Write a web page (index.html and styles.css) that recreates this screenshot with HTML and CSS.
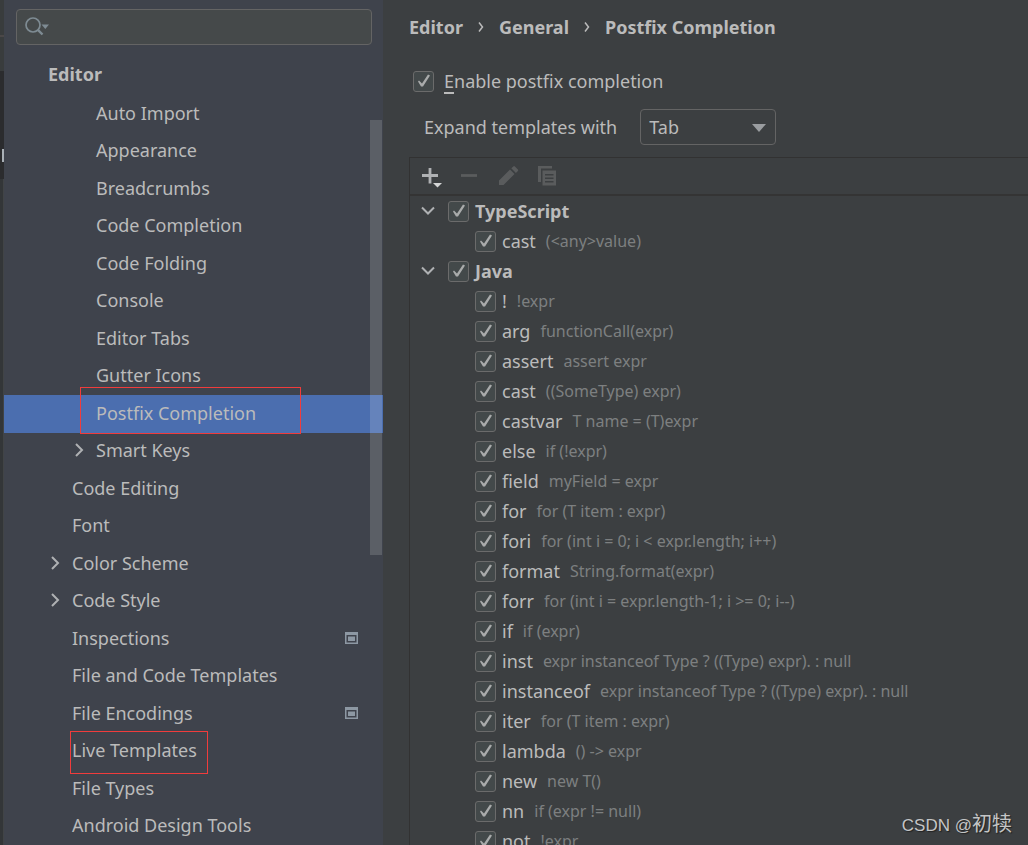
FILE: index.html
```html
<!DOCTYPE html>
<html lang="en">
<head>
<meta charset="utf-8">
<title>Postfix Completion</title>
<link rel="stylesheet" href="styles.css">
</head>
<body>
<div class="window">
  <div class="backdrop"><span class="bar-top"></span><span class="bar-line"></span><span class="bar-tab"></span><span class="bar-rest"></span></div>
  <aside class="sidebar">
    <div class="search">
      <svg class="search-icon" width="26" height="22" viewBox="0 0 26 22"><circle cx="9" cy="9" r="7" fill="none" stroke="#7e8b93" stroke-width="1.7"/><path d="M13.6 13.6L18.5 18.5" stroke="#7e8b93" stroke-width="2.4"/><path d="M17.5 8.5h7.5l-3.7 4.5z" fill="#7e8b93"/></svg>
      <input class="search-input" type="text" aria-label="Search settings">
    </div>
    <h2 class="group">Editor</h2>
    <ul class="nav">
      <li class="deep"><a href="#">Auto Import</a></li>
      <li class="deep"><a href="#">Appearance</a></li>
      <li class="deep"><a href="#">Breadcrumbs</a></li>
      <li class="deep"><a href="#">Code Completion</a></li>
      <li class="deep"><a href="#">Code Folding</a></li>
      <li class="deep"><a href="#">Console</a></li>
      <li class="deep"><a href="#">Editor Tabs</a></li>
      <li class="deep"><a href="#">Gutter Icons</a></li>
      <li class="deep selected"><a href="#">Postfix Completion</a><span class="mark mark-postfix"></span></li>
      <li class="deep"><svg class="arrow" width="10" height="14" viewBox="0 0 10 14"><path d="M2 1l6 6-6 6"/></svg><a href="#">Smart Keys</a></li>
      <li><a href="#">Code Editing</a></li>
      <li><a href="#">Font</a></li>
      <li><svg class="arrow" width="10" height="14" viewBox="0 0 10 14"><path d="M2 1l6 6-6 6"/></svg><a href="#">Color Scheme</a></li>
      <li><svg class="arrow" width="10" height="14" viewBox="0 0 10 14"><path d="M2 1l6 6-6 6"/></svg><a href="#">Code Style</a></li>
      <li><a href="#">Inspections</a><svg class="project" width="13" height="12" viewBox="0 0 13 12"><path d="M0 0h13v12H0zM1.5 3v7.500h10V3z" fill="#8d98a3" fill-rule="evenodd"/><path d="M3 4.500h7v4.500H3z" fill="#8d98a3"/></svg></li>
      <li><a href="#">File and Code Templates</a></li>
      <li><a href="#">File Encodings</a><svg class="project" width="13" height="12" viewBox="0 0 13 12"><path d="M0 0h13v12H0zM1.5 3v7.500h10V3z" fill="#8d98a3" fill-rule="evenodd"/><path d="M3 4.500h7v4.500H3z" fill="#8d98a3"/></svg></li>
      <li><a href="#">Live Templates</a><span class="mark mark-live"></span></li>
      <li><a href="#">File Types</a></li>
      <li><a href="#">Android Design Tools</a></li>
    </ul>
    <div class="scrollbar"></div>
  </aside>
  <main class="content">
    <nav class="crumbs">
      <a href="#">Editor</a>
      <svg width="6" height="12" viewBox="0 0 6 12"><path d="M1 1.500l3.500 4.500L1 10.500"/></svg>
      <a href="#">General</a>
      <svg width="6" height="12" viewBox="0 0 6 12"><path d="M1 1.500l3.500 4.500L1 10.500"/></svg>
      <a href="#">Postfix Completion</a>
    </nav>
    <label class="enable"><input class="check" type="checkbox" checked><span><u>E</u>nable postfix completion</span></label>
    <div class="expand">
      <label for="key">Expand templates with</label>
      <div class="select-box">
        <select id="key"><option>Tab</option><option>Space</option><option>Enter</option></select>
        <svg class="select-arrow" width="14" height="8" viewBox="0 0 14 8"><path d="M0 0h14L7 8z" fill="#9a9da0"/></svg>
      </div>
    </div>
    <section class="panel">
      <div class="toolbar">
        <button type="button" aria-label="Add"><svg width="22" height="22" viewBox="0 0 22 22"><path d="M2 9.500h16M10 2v15.500" stroke="#afb1b3" stroke-width="2.800"/><path d="M13 17h9l-4.500 4.500z" fill="#d4d5d6"/></svg></button>
        <button type="button" aria-label="Remove"><svg width="22" height="22" viewBox="0 0 22 22"><path d="M2 9.500h16" stroke="#5a5c5d" stroke-width="2.800"/></svg></button>
        <button type="button" aria-label="Edit"><svg width="22" height="22" viewBox="0 0 22 22"><path d="M1 14.500L12 3.500l4.500 4.500-11 11H1zM13.300 2.200l2-1.800q.8-.6 1.600.1l3 3q.7.8 0 1.500l-2 2z" fill="#5a5c5d"/></svg></button>
        <button type="button" aria-label="Duplicate"><svg width="22" height="22" viewBox="0 0 22 22"><path d="M1 0h14v2.500H4V16H1z" fill="#5a5c5d"/><path d="M5.500 4.500H19V19.500H5.500zM8 8v1.500h8.500V8zM8 11.500V13h8.500v-1.500zM8 15v1.500h8.500V15z" fill="#5a5c5d" fill-rule="evenodd"/></svg></button>
      </div>
      <ul class="tree">
        <li class="lang"><svg class="open" width="14" height="10" viewBox="0 0 14 10"><path d="M1 1.500l6 6 6-6"/></svg><label><input class="check" type="checkbox" checked>TypeScript</label></li>
        <li><label><input class="check" type="checkbox" checked>cast<span class="hint">(&lt;any&gt;value)</span></label></li>
        <li class="lang"><svg class="open" width="14" height="10" viewBox="0 0 14 10"><path d="M1 1.500l6 6 6-6"/></svg><label><input class="check" type="checkbox" checked>Java</label></li>
        <li><label><input class="check" type="checkbox" checked>!<span class="hint">!expr</span></label></li>
        <li><label><input class="check" type="checkbox" checked>arg<span class="hint">functionCall(expr)</span></label></li>
        <li><label><input class="check" type="checkbox" checked>assert<span class="hint">assert expr</span></label></li>
        <li><label><input class="check" type="checkbox" checked>cast<span class="hint">((SomeType) expr)</span></label></li>
        <li><label><input class="check" type="checkbox" checked>castvar<span class="hint">T name = (T)expr</span></label></li>
        <li><label><input class="check" type="checkbox" checked>else<span class="hint">if (!expr)</span></label></li>
        <li><label><input class="check" type="checkbox" checked>field<span class="hint">myField = expr</span></label></li>
        <li><label><input class="check" type="checkbox" checked>for<span class="hint">for (T item : expr)</span></label></li>
        <li><label><input class="check" type="checkbox" checked>fori<span class="hint">for (int i = 0; i &lt; expr.length; i++)</span></label></li>
        <li><label><input class="check" type="checkbox" checked>format<span class="hint">String.format(expr)</span></label></li>
        <li><label><input class="check" type="checkbox" checked>forr<span class="hint">for (int i = expr.length-1; i &gt;= 0; i--)</span></label></li>
        <li><label><input class="check" type="checkbox" checked>if<span class="hint">if (expr)</span></label></li>
        <li><label><input class="check" type="checkbox" checked>inst<span class="hint">expr instanceof Type ? ((Type) expr). : null</span></label></li>
        <li><label><input class="check" type="checkbox" checked>instanceof<span class="hint">expr instanceof Type ? ((Type) expr). : null</span></label></li>
        <li><label><input class="check" type="checkbox" checked>iter<span class="hint">for (T item : expr)</span></label></li>
        <li><label><input class="check" type="checkbox" checked>lambda<span class="hint">() -&gt; expr</span></label></li>
        <li><label><input class="check" type="checkbox" checked>new<span class="hint">new T()</span></label></li>
        <li><label><input class="check" type="checkbox" checked>nn<span class="hint">if (expr != null)</span></label></li>
        <li><label><input class="check" type="checkbox" checked>not<span class="hint">!expr</span></label></li>
      </ul>
    </section>
  </main>
  <div class="watermark">CSDN @<span class="author">初犊</span></div>
</div>
</body>
</html>
```
FILE: styles.css
```css
* { box-sizing: border-box; }
body {
  margin: 0;
  background: #3c3f41;
  color: #bbbbbb;
  font: 18px/24px "Noto Sans", "Noto Sans CJK SC", sans-serif;
}
a { color: inherit; text-decoration: none; }
ul { list-style: none; margin: 0; padding: 0; }
svg { display: block; flex: none; }

.window { position: relative; display: flex; height: 100vh; overflow: hidden; }

.backdrop { flex: none; width: 4px; display: flex; flex-direction: column; background: #393c3d; }
.bar-top { height: 35px; }
.bar-line { height: 36px; border-top: 2px solid #4b4848; }
.bar-tab { height: 108px; background: linear-gradient(#a9b0b6, #a9b0b6) 2px 78px / 2px 13px no-repeat #2b2c2e; }
.bar-rest { flex: 1; border-left: 3px solid #333638; background: #414446; }

.sidebar {
  position: relative;
  flex: none;
  width: 379px;
  display: flex;
  flex-direction: column;
  background: #3f434c;
}
.search {
  display: flex;
  align-items: center;
  height: 36px;
  margin: 9px 11px 0 12px;
  padding: 0 7px;
  border: 1px solid #646464;
  border-radius: 4px;
  background: #45494a;
}
.search-input { flex: 1; min-width: 0; border: 0; outline: 0; background: none; color: inherit; font: inherit; }
.group { margin: 17px 0 0; padding-left: 44px; font-size: 18px; line-height: 24px; }
.nav { flex: 1; display: flex; flex-direction: column; margin-top: 9px; }
.nav li { position: relative; flex: 1; display: flex; align-items: center; padding: 0 25px 2px 68px; }
.nav .deep { padding-left: 92px; }
.nav .selected { background: #4b6eaf; }
.nav a { flex: 1; }
.arrow { margin: 0 12px 0 -22px; fill: none; stroke: #afb1b3; stroke-width: 2; }
.mark { position: absolute; border: 1px solid #f03c3c; z-index: 2; pointer-events: none; }
.mark-postfix { left: 76px; top: -8px; width: 221px; height: 47px; }
.mark-live { left: 66px; top: -2px; width: 138px; height: 43px; }
.scrollbar { position: absolute; right: 1px; top: 120px; width: 12px; height: 435px; background: rgba(255, 255, 255, 0.15); z-index: 1; }

.content { flex: 1; min-width: 0; display: flex; flex-direction: column; padding: 15px 0 0 26px; }
.crumbs { display: flex; align-items: center; gap: 15px; font-weight: bold; }
.crumbs svg { fill: none; stroke: #bbbbbb; stroke-width: 1.5; }
.enable { display: flex; align-items: center; align-self: flex-start; gap: 10px; margin: 30px 0 0 4px; }
.enable u { text-underline-offset: 4px; text-decoration-thickness: 2px; }
.expand { display: flex; align-items: center; gap: 23px; margin: 16px 0 0 15px; }
.select-box { position: relative; width: 136px; }
.select-box select {
  appearance: none;
  display: block;
  width: 100%;
  height: 36px;
  padding: 0 8px;
  border: 1px solid #646464;
  border-radius: 4px;
  background: #3c3f41;
  color: inherit;
  font: inherit;
}
.select-arrow { position: absolute; right: 10px; top: 15px; pointer-events: none; }

.check {
  appearance: none;
  flex: none;
  width: 21px;
  height: 21px;
  margin: 0;
  border: 1px solid #6b6b6b;
  border-radius: 3px;
  background: #43494a;
}
.check:checked::before {
  content: "";
  display: block;
  width: 19px;
  height: 19px;
  background: #a9abab;
  clip-path: polygon(4px 10px, 5px 9px, 8px 12px, 14px 3px, 16px 4px, 9px 15px, 7px 15px);
}

.panel { flex: 1; min-height: 0; display: flex; flex-direction: column; margin-top: 12px; border: 1px solid #323232; border-width: 1px 0 0 1px; }
.toolbar { flex: none; display: flex; align-items: center; gap: 17px; height: 38px; padding: 2px 0 0 10px; border-bottom: 2px solid #343434; }
.toolbar button { padding: 0; border: 0; background: none; }
.tree { flex: 1; min-height: 0; overflow: hidden; }
.tree li { display: flex; align-items: center; height: 30px; padding-left: 65px; }
.tree label { display: flex; align-items: center; gap: 6px; white-space: pre; }
.tree .lang { padding-left: 11px; gap: 13px; font-weight: bold; }
.open { fill: none; stroke: #afb1b3; stroke-width: 2; }
.hint { margin-left: 4px; color: #7d7f80; font-size: 16px; }

.watermark {
  position: absolute;
  right: 16px;
  bottom: 7px;
  color: #c4c5c6;
  font: 17px/24px "Liberation Sans", "Noto Sans CJK SC", sans-serif;
  text-shadow: 1px 1px 1px #222222;
}
.author { font-size: 20px; }
```
